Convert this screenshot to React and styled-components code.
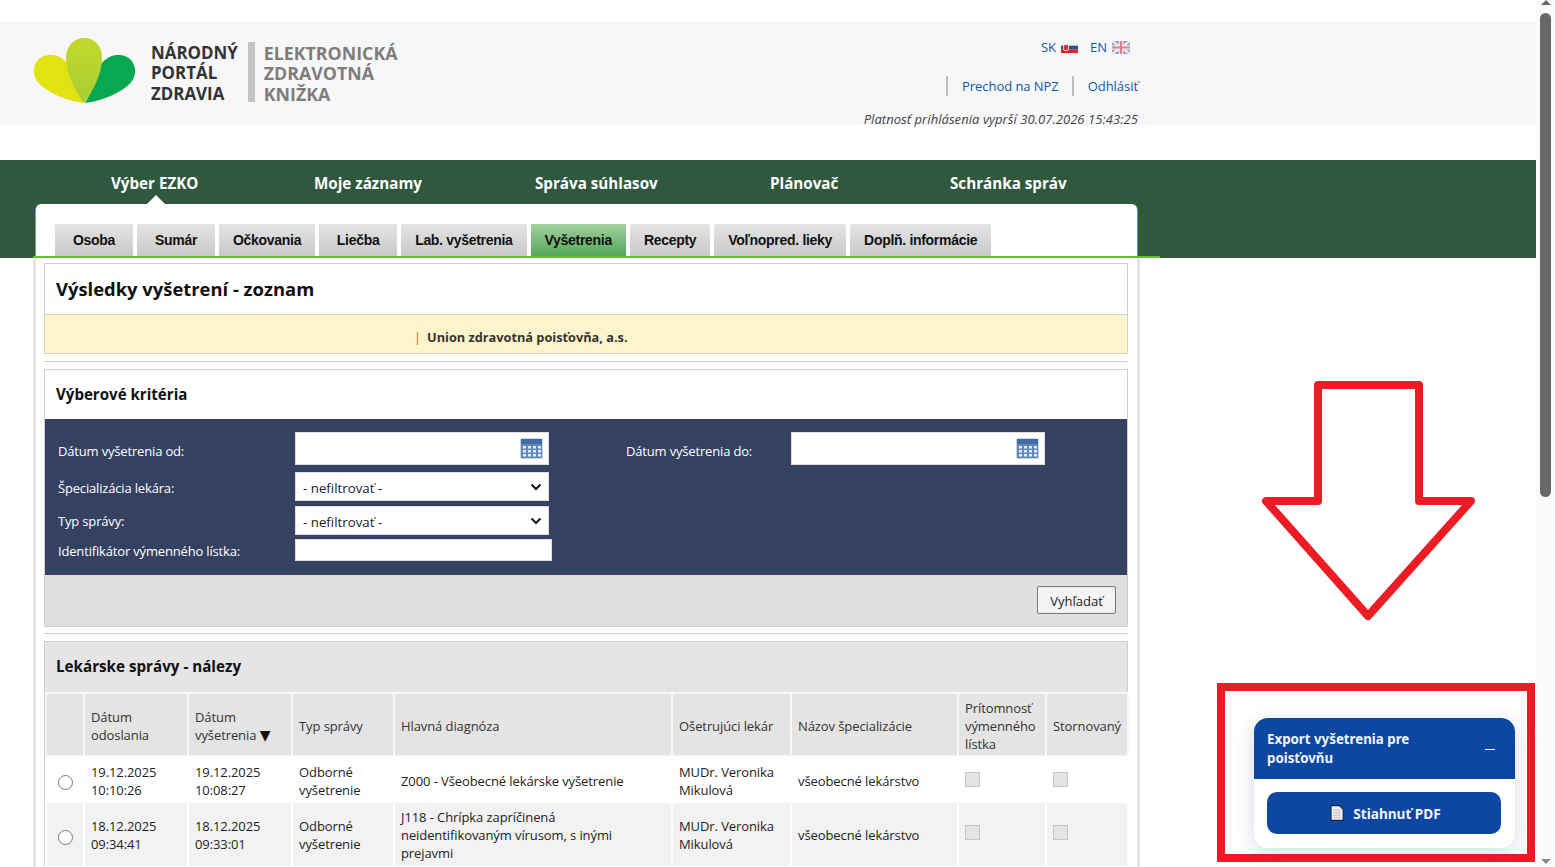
import React from 'react';
import styled, { createGlobalStyle } from 'styled-components';

const GlobalStyle = createGlobalStyle`
  html, body {
    margin: 0;
    height: 867px;
    overflow: hidden;
    background: #fff;
    font-family: 'Open Sans', 'Noto Sans', sans-serif;
    color: #222;
  }
  * { box-sizing: border-box; }
`;

const NAV_ITEMS = [
  { label: 'Výber EZKO', width: 203 },
  { label: 'Moje záznamy', width: 221 },
  { label: 'Správa súhlasov', width: 235 },
  { label: 'Plánovač', width: 180 },
  { label: 'Schránka správ', width: 120 },
];
const TABS = ['Osoba', 'Sumár', 'Očkovania', 'Liečba', 'Lab. vyšetrenia', 'Vyšetrenia', 'Recepty', 'Voľnopred. lieky', 'Doplň. informácie'];
const COLUMNS = [38, 104, 104, 102, 278, 119, 167, 88, 82];

const App = () => {
  return (
    <Page>
      <GlobalStyle />
      <Header>
        <LogoBlock>
          <svg width="104" height="68" viewBox="0 0 104 68">
            <defs>
              <linearGradient id="petal" x1="0" y1="0" x2="0" y2="1">
                <stop offset="0" stopColor="#c2d92a" />
                <stop offset="1" stopColor="#a9cd34" />
              </linearGradient>
            </defs>
            <path d="M51 65 C34 63 12 54 4 43 C-3 33 2 18 16 17 C27 16 36 24 39 34 C42 46 46 57 51 65 Z" fill="#e0e212" />
            <path d="M52 65 C69 63 91 54 99 43 C106 33 101 18 87 17 C76 16 67 24 64 34 C61 46 57 57 52 65 Z" fill="#07a850" />
            <path d="M51 65 C42 53 33 36 33 20 C33 8 41 0 51 0 C62 0 69 8 69 20 C69 36 60 53 51 65 Z" fill="url(#petal)" />
          </svg>
          <LogoName>NÁRODNÝ<br />PORTÁL<br />ZDRAVIA</LogoName>
          <LogoDivider />
          <LogoProduct>ELEKTRONICKÁ<br />ZDRAVOTNÁ<br />KNIŽKA</LogoProduct>
        </LogoBlock>
        <HeaderRight>
          <LangRow>
            <LangLink>SK
              <svg width="17" height="11" viewBox="0 0 17 11">
                <rect width="17" height="4" fill="#f2f2f2" />
                <rect y="3.7" width="17" height="3.6" fill="#2a4fa5" />
                <rect y="7.3" width="17" height="3.7" fill="#e0202c" />
                <rect x="2.5" y="2.5" width="5" height="6" rx="1.5" fill="#d8303c" stroke="#fff" strokeWidth="0.7" />
              </svg>
            </LangLink>
            <LangLink>EN
              <svg width="18" height="13" viewBox="0 0 18 13">
                <rect width="18" height="13" fill="#8f9fc8" />
                <path d="M0 0 L18 13 M18 0 L0 13" stroke="#f0e6ea" strokeWidth="2.4" />
                <path d="M9 0 V13 M0 6.5 H18" stroke="#f4ecee" strokeWidth="4.4" />
                <path d="M9 0 V13 M0 6.5 H18" stroke="#e2808c" strokeWidth="2.2" />
              </svg>
            </LangLink>
          </LangRow>
          <LinkRow>
            <HeaderLink>Prechod na NPZ</HeaderLink>
            <HeaderLink>Odhlásiť</HeaderLink>
          </LinkRow>
          <Expiry>Platnosť prihlásenia vyprší 30.07.2026 15:43:25</Expiry>
        </HeaderRight>
      </Header>

      <GreenBand>
        <MainNav>
          {NAV_ITEMS.map((item, i) => (
            <NavItem key={item.label} $width={item.width} $active={i === 0}>{item.label}</NavItem>
          ))}
        </MainNav>
        <NavCard>
          <TabRow>
            {TABS.map(tab => (
              <Tab key={tab} $active={tab === 'Vyšetrenia'}>{tab}</Tab>
            ))}
          </TabRow>
        </NavCard>
      </GreenBand>

      <Content>
        <TitlePanel>
          <PageTitle>Výsledky vyšetrení - zoznam</PageTitle>
        </TitlePanel>
        <InsuranceBar>
          <InsuranceMark>|</InsuranceMark>Union zdravotná poisťovňa, a.s.
        </InsuranceBar>
        <Rule />
        <Panel>
          <PanelHeading>Výberové kritéria</PanelHeading>
          <FilterBox>
            <FilterRow $height={33} $after={7}>
              <FilterLabel $nudge={4}>Dátum vyšetrenia od:</FilterLabel>
              <DateField><CalendarIcon /></DateField>
              <FilterLabel $second $nudge={4}>Dátum vyšetrenia do:</FilterLabel>
              <DateField><CalendarIcon /></DateField>
            </FilterRow>
            <FilterRow $height={29} $after={5}>
              <FilterLabel $nudge={2}>Špecializácia lekára:</FilterLabel>
              <FilterSelect defaultValue="x"><option value="x">- nefiltrovať -</option></FilterSelect>
            </FilterRow>
            <FilterRow $height={29} $after={4}>
              <FilterLabel $nudge={0}>Typ správy:</FilterLabel>
              <FilterSelect defaultValue="x"><option value="x">- nefiltrovať -</option></FilterSelect>
            </FilterRow>
            <FilterRow $height={22}>
              <FilterLabel $nudge={2}>Identifikátor výmenného lístka:</FilterLabel>
              <TextField />
            </FilterRow>
          </FilterBox>
          <FilterFooter>
            <SearchButton>Vyhľadať</SearchButton>
          </FilterFooter>
        </Panel>
        <Rule $top={6} />
        <ResultPanel>
          <ResultHeading>Lekárske správy - nálezy</ResultHeading>
          <ResultTable>
            <colgroup>
              {COLUMNS.map((w, i) => <col key={i} width={w} />)}
            </colgroup>
            <thead>
              <tr>
                <Th />
                <Th>Dátum odoslania</Th>
                <Th>Dátum vyšetrenia <SortArrow>▼</SortArrow></Th>
                <Th>Typ správy</Th>
                <Th>Hlavná diagnóza</Th>
                <Th>Ošetrujúci lekár</Th>
                <Th>Názov špecializácie</Th>
                <Th>Prítomnosť výmenného lístka</Th>
                <Th>Stornovaný</Th>
              </tr>
            </thead>
            <tbody>
              <Row $height={47}>
                <Td $center><Radio type="radio" name="r" $top={3} /></Td>
                <Td>19.12.2025<br />10:10:26</Td>
                <Td>19.12.2025<br />10:08:27</Td>
                <Td>Odborné vyšetrenie</Td>
                <Td>Z000 - Všeobecné lekárske vyšetrenie</Td>
                <Td>MUDr. Veronika Mikulová</Td>
                <Td>všeobecné lekárstvo</Td>
                <Td><Check type="checkbox" disabled /></Td>
                <Td><Check type="checkbox" disabled /></Td>
              </Row>
              <Row $height={63} $alt>
                <Td $center><Radio type="radio" name="r" $top={5} /></Td>
                <Td>18.12.2025<br />09:34:41</Td>
                <Td>18.12.2025<br />09:33:01</Td>
                <Td>Odborné vyšetrenie</Td>
                <Td>J118 - Chrípka zapríčinená neidentifikovaným vírusom, s inými prejavmi</Td>
                <Td>MUDr. Veronika Mikulová</Td>
                <Td>všeobecné lekárstvo</Td>
                <Td><Check type="checkbox" disabled /></Td>
                <Td><Check type="checkbox" disabled /></Td>
              </Row>
            </tbody>
          </ResultTable>
        </ResultPanel>
      </Content>

      {/* anotacie nakreslene cez stranku */}
      <BigArrow width="230" height="250" viewBox="0 0 230 250">
        <path d="M11 124 H63 V8 H164 V124 H216 L113 239 Z" fill="none" stroke="#ed1c24" strokeWidth="8" strokeLinejoin="round" />
      </BigArrow>
      <RedFrame />
      <ExportCard>
        <ExportHead>
          <ExportTitle>Export vyšetrenia pre poisťovňu</ExportTitle>
          <Collapse />
        </ExportHead>
        <ExportBody>
          <PdfButton>
            <svg width="14" height="16" viewBox="0 0 14 16">
              <path d="M1 .7 H9.5 L13.2 4.4 V15.3 H1 Z" fill="#f4f4f4" stroke="#10243f" strokeWidth="1.2" />
              <path d="M3 5 H11 M3 7.5 H11 M3 10 H11 M3 12.5 H11" stroke="#c9c9c9" strokeWidth="1.4" />
            </svg>
            Stiahnuť PDF
          </PdfButton>
        </ExportBody>
      </ExportCard>

      <Scrollbar>
        <ScrollUp />
        <ScrollThumb />
        <ScrollDown />
      </Scrollbar>
    </Page>
  );
};

const CalendarIcon = () => (
  <CalendarSvg width="23" height="21" viewBox="0 0 23 21">
    <rect width="23" height="21" rx="2" fill="#c9d3e2" />
    <rect x="1" y="1" width="21" height="5" fill="#3e6da6" />
    <rect x="1" y="6" width="21" height="14" fill="#5f88b8" />
    <path d="M3 8 h3v2.5h-3z M8 8 h3v2.5h-3z M13 8 h3v2.5h-3z M18 8 h3v2.5h-3z M3 12 h3v2.5h-3z M8 12 h3v2.5h-3z M13 12 h3v2.5h-3z M18 12 h3v2.5h-3z M3 16 h3v2.5h-3z M8 16 h3v2.5h-3z M13 16 h3v2.5h-3z M18 16 h3v2.5h-3z" fill="#e6edf5" />
  </CalendarSvg>
);

export default App;

const CHEVRON = "data:image/svg+xml,%3Csvg xmlns='http://www.w3.org/2000/svg' width='12' height='8' viewBox='0 0 12 8'%3E%3Cpath d='M1.5 1.5 L6 6 L10.5 1.5' fill='none' stroke='%23111' stroke-width='2'/%3E%3C/svg%3E";

const Page = styled.div`
  position: relative;
  width: 1555px;
  height: 867px;
  overflow: hidden;
  padding-top: 21px;
`;

const Header = styled.header`
  width: 1536px;
  height: 104px;
  background: #f7f7f7;
  display: flex;
  justify-content: space-between;
  padding: 17px 398px 0 33px;
`;

const LogoBlock = styled.div`
  display: flex;
  align-items: flex-start;
`;

const LogoName = styled.div`
  margin: 5px 0 0 14px;
  font-size: 16.9px;
  line-height: 20.4px;
  font-weight: 700;
  color: #333;
  white-space: nowrap;
`;

const LogoDivider = styled.div`
  width: 7px;
  height: 60px;
  margin: 4px 9px 0 10px;
  background: #c4c4c4;
`;

const LogoProduct = styled(LogoName)`
  margin-left: 0;
  font-size: 17.8px;
  color: #7d7d7d;
`;

const HeaderRight = styled.div`
  display: flex;
  flex-direction: column;
  align-items: flex-end;
`;

const LangRow = styled.div`
  display: flex;
  gap: 12px;
  height: 20px;
  margin: 0 8px 0 0;
  align-items: center;
`;

const LangLink = styled.span`
  display: flex;
  align-items: center;
  gap: 5px;
  font-size: 13px;
  color: #0b5aa6;
`;

const LinkRow = styled.div`
  display: flex;
  margin-top: 20px;
  height: 20px;
`;

const HeaderLink = styled.span`
  border-left: 2px solid #bdbdbd;
  padding-left: 14px;
  margin-left: 13px;
  font-size: 13px;
  line-height: 20px;
  letter-spacing: -0.05px;
  color: #0b5aa6;
`;

const Expiry = styled.div`
  margin-top: 14px;
  font-size: 13px;
  line-height: 18px;
  letter-spacing: 0.06px;
  font-style: italic;
  color: #444;
  white-space: nowrap;
`;

const GreenBand = styled.div`
  width: 1536px;
  height: 98px;
  margin-top: 35px;
  background: #30583f;
`;

const MainNav = styled.nav`
  display: flex;
  height: 44px;
  padding: 13px 0 0 111px;
`;

const NavItem = styled.div`
  position: relative;
  flex: none;
  width: ${props => props.$width}px;
  height: 31px;
  font-size: 15.2px;
  line-height: 20px;
  font-weight: 700;
  color: #fff;

  ${props => props.$active && `
    &::after {
      content: '';
      position: absolute;
      left: 36px;
      bottom: 0;
      border: 9px solid transparent;
      border-top: 0;
      border-bottom-color: #fff;
    }
  `}
`;

const NavCard = styled.div`
  margin-left: 35px;
  width: 1103px;
  height: 54px;
  padding-top: 20px;
  background: #fff;
  border-radius: 6px 6px 0 0;
  border-left: 1px solid #5dbb2e;
  border-right: 1px solid #5dbb2e;
`;

const TabRow = styled.div`
  display: flex;
  gap: 4px;
  height: 34px;
  margin: 0 -23px 0 -3px;
  padding-left: 22px;
  border-bottom: 2px solid #5fbf2d;
`;

const Tab = styled.div`
  min-width: 78px;
  height: 32px;
  padding: 0 14px;
  text-align: center;
  font-family: 'Liberation Sans', Arial, sans-serif;
  font-size: 14px;
  letter-spacing: -0.3px;
  line-height: 33px;
  font-weight: 700;
  color: #111;
  background: ${props => props.$active
    ? 'linear-gradient(180deg, #a2d0a0 0%, #55a85a 100%)'
    : 'linear-gradient(180deg, #e4e4e4 0%, #c9c9c9 100%)'};
`;

const Content = styled.main`
  width: 1107px;
  margin-left: 33px;
  padding: 5px 9px 0 8px;
  border-left: 3px solid #e4e4e4;
  border-right: 3px solid #e4e4e4;
  height: 609px;
`;

const TitlePanel = styled.div`
  height: 52px;
  padding: 0 0 2px 11px;
  border: 1px solid #cfcfcf;
  display: flex;
  align-items: center;
`;

const PageTitle = styled.h1`
  margin: 0;
  font-size: 18.4px;
  font-weight: 700;
  color: #111;
`;

const InsuranceBar = styled.div`
  height: 40px;
  margin-top: -1px;
  padding-left: 369px;
  background: #fdf3cd;
  border: 1px solid #d8d3b8;
  font-size: 12.75px;
  line-height: 45px;
  font-weight: 700;
  color: #333;
`;

const InsuranceMark = styled.span`
  margin-right: 6px;
  font-weight: 400;
  color: #c4651c;
`;

const Rule = styled.div`
  height: 1px;
  margin: ${props => props.$top || 7}px 0 7px;
  background: #d0d0d0;
`;

const Panel = styled.section`
  border: 1px solid #cfcfcf;
`;

const PanelHeading = styled.h2`
  margin: 0;
  height: 49px;
  padding-left: 11px;
  font-size: 15.1px;
  line-height: 49px;
  font-weight: 700;
  color: #111;
`;

const FilterBox = styled.div`
  display: flex;
  flex-direction: column;
  height: 156px;
  padding: 13px 0 0 13px;
  background: #344161;
`;

const FilterRow = styled.div`
  display: flex;
  align-items: center;
  height: ${props => props.$height}px;
  margin-bottom: ${props => props.$after || 0}px;
`;

const FilterLabel = styled.label`
  flex: none;
  width: ${props => (props.$second ? '165px' : '237px')};
  margin-left: ${props => (props.$second ? '77px' : '0')};
  padding-top: ${props => props.$nudge}px;
  font-size: 13px;
  letter-spacing: -0.17px;
  color: #fff;
  white-space: nowrap;
`;

const DateField = styled.div`
  display: flex;
  align-items: center;
  justify-content: flex-end;
  width: 254px;
  height: 33px;
  padding-right: 5px;
  background: #fff;
  border: 1px solid #ddd;
`;

const CalendarSvg = styled.svg`
  flex: none;
`;

const FilterSelect = styled.select`
  appearance: none;
  width: 254px;
  height: 29px;
  padding: 2px 0 0 7px;
  background: #fff url("${CHEVRON}") no-repeat right 6px top 10px;
  border: 1px solid #ddd;
  border-radius: 0;
  font-family: inherit;
  font-size: 13.3px;
  color: #222;
`;

const TextField = styled.input`
  width: 257px;
  height: 22px;
  background: #fff;
  border: 1px solid #ddd;
`;

const FilterFooter = styled.div`
  display: flex;
  justify-content: flex-end;
  height: 51px;
  padding: 11px 11px 0 0;
  background: #dfdfdf;
`;

const SearchButton = styled.button`
  width: 79px;
  height: 28px;
  padding-top: 3px;
  background: #f4f4f4;
  border: 1px solid #777;
  border-radius: 2px;
  font-family: inherit;
  font-size: 13px;
  color: #222;
`;

const ResultPanel = styled(Panel)`
  border-bottom: 0;
`;

const ResultHeading = styled(PanelHeading)`
  height: 50px;
  line-height: 48px;
  font-size: 15.2px;
  background: #e5e5e5;
`;

const ResultTable = styled.table`
  width: 1082px;
  table-layout: fixed;
  border-collapse: collapse;
  font-size: 13px;
  line-height: 18px;
  letter-spacing: -0.09px;
`;

const Th = styled.th`
  height: 63px;
  padding: 3px 5px 0 6px;
  background: #e4e4e4;
  border: 2px solid #f8f8f8;
  text-align: left;
  font-weight: 400;
  color: #333;
`;

const SortArrow = styled.span`
  font-family: 'DejaVu Sans', sans-serif;
  font-size: 14px;
  color: #111;
`;

const Row = styled.tr`
  height: ${props => props.$height}px;
  background: ${props => (props.$alt ? '#f2f2f2' : '#fff')};

  & > td {
    padding-top: ${props => (props.$alt ? 0 : 2)}px;
  }
`;

const Td = styled.td`
  padding: 2px 5px 0 6px;
  border-left: 2px solid #fff;
  border-right: 2px solid #fff;
  text-align: ${props => (props.$center ? 'center' : 'left')};
  color: #222;
`;

const Radio = styled.input`
  display: block;
  width: 15px;
  height: 15px;
  margin: ${props => props.$top}px 0 0 5px;
`;

const Check = styled.input`
  appearance: none;
  display: block;
  width: 15px;
  height: 15px;
  margin: 0 0 4px;
  background: #e4e4e4;
  border: 1px solid #c6c6c6;
`;

const BigArrow = styled.svg`
  position: absolute;
  left: 1255px;
  top: 377px;
`;

const RedFrame = styled.div`
  position: absolute;
  left: 1217px;
  top: 683px;
  width: 318px;
  height: 179px;
  border: 8px solid #ed1c24;
`;

const ExportCard = styled.aside`
  position: absolute;
  left: 1254px;
  top: 718px;
  width: 261px;
  height: 130px;
  border-radius: 14px;
  background: #fff;
  overflow: hidden;
  box-shadow: 0 4px 20px rgba(30, 50, 100, 0.18);
`;

const ExportHead = styled.div`
  display: flex;
  align-items: center;
  justify-content: space-between;
  height: 61px;
  padding: 0 20px 0 13px;
  background: #0d47a1;
`;

const ExportTitle = styled.div`
  width: 190px;
  font-family: 'Noto Sans', sans-serif;
  font-size: 13.3px;
  line-height: 19px;
  font-weight: 700;
  color: #f0f4fb;
`;

const Collapse = styled.div`
  width: 10px;
  height: 1px;
  margin-top: 1px;
  background: #fff;
`;

const ExportBody = styled.div`
  padding: 13px 14px 0 13px;
`;

const PdfButton = styled.button`
  display: flex;
  align-items: center;
  justify-content: center;
  gap: 9px;
  width: 234px;
  height: 42px;
  padding-left: 9px;
  background: #0d47a1;
  border: 0;
  border-radius: 10px;
  font-family: 'Noto Sans', sans-serif;
  font-size: 13.6px;
  font-weight: 700;
  color: #f0f4fb;
`;

const Scrollbar = styled.div`
  position: absolute;
  right: 0;
  top: 0;
  width: 19px;
  height: 867px;
  background: #fafafa;
  display: flex;
  flex-direction: column;
  align-items: center;
`;

const ScrollUp = styled.div`
  margin-top: 0;
  border: 5px solid transparent;
  border-top: 0;
  border-bottom: 5px solid #666;
`;

const ScrollThumb = styled.div`
  width: 11px;
  height: 484px;
  margin-top: 8px;
  border-radius: 6px;
  background: #686868;
`;

const ScrollDown = styled.div`
  margin-top: auto;
  margin-bottom: 3px;
  border: 5px solid transparent;
  border-bottom: 0;
  border-top: 5px solid #888;
`;
